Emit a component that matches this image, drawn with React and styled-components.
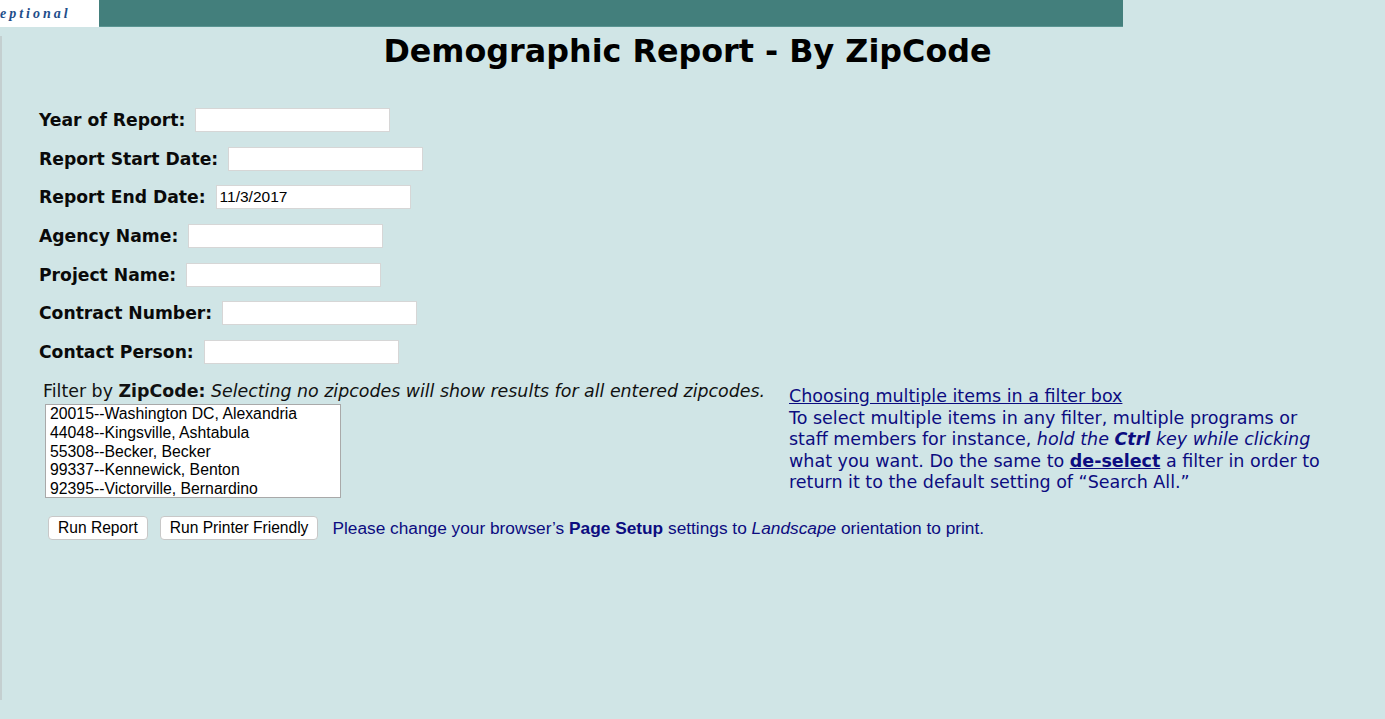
import React from 'react'
import styled, { createGlobalStyle } from 'styled-components'

const GlobalStyle = createGlobalStyle`
  html, body {
    margin: 0;
    padding: 0;
    background: #d0e5e6;
  }
`

const TopBar = styled.div`
  display: flex;
  height: 27px;
`

const LogoBox = styled.div`
  width: 99px;
  background: #fff;
  overflow: hidden;
  display: flex;
  align-items: center;
  font-family: "Liberation Serif", serif;
  font-style: italic;
  font-weight: bold;
  font-size: 14px;
  letter-spacing: 3px;
  color: #1e4e8a;
  white-space: nowrap;
`

const Banner = styled.div`
  width: 1024px;
  background: #437f7c;
  border-bottom: 1px solid #5a9592;
`

const Frame = styled.div`
  margin-top: 9px;
  height: 664px;
  border-left: 2px solid #c4cfd0;
`

const Title = styled.h1`
  margin: 0;
  padding-right: 12px;
  text-align: center;
  font-family: "DejaVu Sans", Verdana, sans-serif;
  font-weight: bold;
  font-size: 31.8px;
  line-height: 30px;
  color: #000;
`

const Form = styled.div`
  padding: 42px 0 0 37px;
  display: flex;
  flex-direction: column;
  gap: 14.7px;
`

const Row = styled.div`
  display: flex;
  align-items: center;
  height: 24px;
`

const Label = styled.label`
  font-family: "DejaVu Sans", Verdana, sans-serif;
  font-weight: bold;
  font-size: 17.2px;
  color: #0a0a0a;
  margin-right: 10px;
`

const TextInput = styled.input`
  width: 187px;
  height: 20px;
  border: 1px solid #d6d6d6;
  background: #fff;
  padding: 1px 3px;
  font-family: "Liberation Sans", Arial, sans-serif;
  font-size: 15.5px;
  color: #000;
  outline: none;
`

const Lower = styled.div`
  display: flex;
  padding-left: 41px;
  margin-top: 16px;
`

const FilterCol = styled.div`
  width: 746px;
`

const FilterLine = styled.div`
  font-family: "DejaVu Sans", Verdana, sans-serif;
  font-size: 17.4px;
  color: #111;
  line-height: 22px;
  b { font-weight: bold; }
  i { font-style: italic; }
`

const ListBox = styled.div`
  margin: 2px 0 0 2px;
  width: 296px;
  height: 94px;
  background: #fff;
  border: 1px solid #a9a9a9;
  box-sizing: border-box;
  padding: 0 0 0 4px;
  overflow: hidden;
`

const Option = styled.div`
  font-family: "Liberation Sans", Arial, sans-serif;
  font-size: 15.8px;
  line-height: 18.7px;
  color: #000;
  white-space: nowrap;
`

const HelpCol = styled.div`
  padding-top: 6px;
  font-family: "DejaVu Sans", Verdana, sans-serif;
  font-size: 17.5px;
  line-height: 21.5px;
  color: #0c0c80;
  width: 540px;
`

const HelpLink = styled.a`
  color: #0c0c80;
  text-decoration: underline;
`

const Actions = styled.div`
  display: flex;
  align-items: center;
  padding-left: 46px;
  margin-top: 18px;
`

const Button = styled.button`
  height: 24px;
  padding: 0 9px;
  margin-right: 12px;
  background: #fff;
  border: 1px solid #c8c8c8;
  border-radius: 4px;
  font-family: "Liberation Sans", Arial, sans-serif;
  font-size: 15.6px;
  color: #000;
`

const Note = styled.span`
  margin-left: 2px;
  font-family: "Liberation Sans", Arial, sans-serif;
  font-size: 17.3px;
  color: #0c0c80;
`

const fields = [
  { label: 'Year of Report:', value: '' },
  { label: 'Report Start Date:', value: '' },
  { label: 'Report End Date:', value: '11/3/2017' },
  { label: 'Agency Name:', value: '' },
  { label: 'Project Name:', value: '' },
  { label: 'Contract Number:', value: '' },
  { label: 'Contact Person:', value: '' },
]

const zips = [
  '20015--Washington DC, Alexandria',
  '44048--Kingsville, Ashtabula',
  '55308--Becker, Becker',
  '99337--Kennewick, Benton',
  '92395--Victorville, Bernardino',
]

export default function App() {
  return (
    <>
      <GlobalStyle />
      <TopBar>
        <LogoBox>eptional</LogoBox>
        <Banner />
      </TopBar>
      <Frame>
        <Title>Demographic Report - By ZipCode</Title>
        <Form>
          {fields.map((f) => (
            <Row key={f.label}>
              <Label>{f.label}</Label>
              <TextInput defaultValue={f.value} />
            </Row>
          ))}
        </Form>
        <Lower>
          <FilterCol>
            <FilterLine>
              Filter by <b>ZipCode:</b> <i>Selecting no zipcodes will show results for all entered zipcodes.</i>
            </FilterLine>
            <ListBox>
              {zips.map((z) => (
                <Option key={z}>{z}</Option>
              ))}
            </ListBox>
          </FilterCol>
          <HelpCol>
            <HelpLink href="#">Choosing multiple items in a filter box</HelpLink>
            <br />
            To select multiple items in any filter, multiple programs or staff members for instance,{' '}
            <i>hold the <b>Ctrl</b> key while clicking</i> what you want. Do the same to{' '}
            <b><u>de-select</u></b> a filter in order to return it to the default setting of “Search All.”
          </HelpCol>
        </Lower>
        <Actions>
          <Button>Run Report</Button>
          <Button>Run Printer Friendly</Button>
          <Note>
            Please change your browser’s <b>Page Setup</b> settings to <i>Landscape</i> orientation to print.
          </Note>
        </Actions>
      </Frame>
    </>
  )
}
